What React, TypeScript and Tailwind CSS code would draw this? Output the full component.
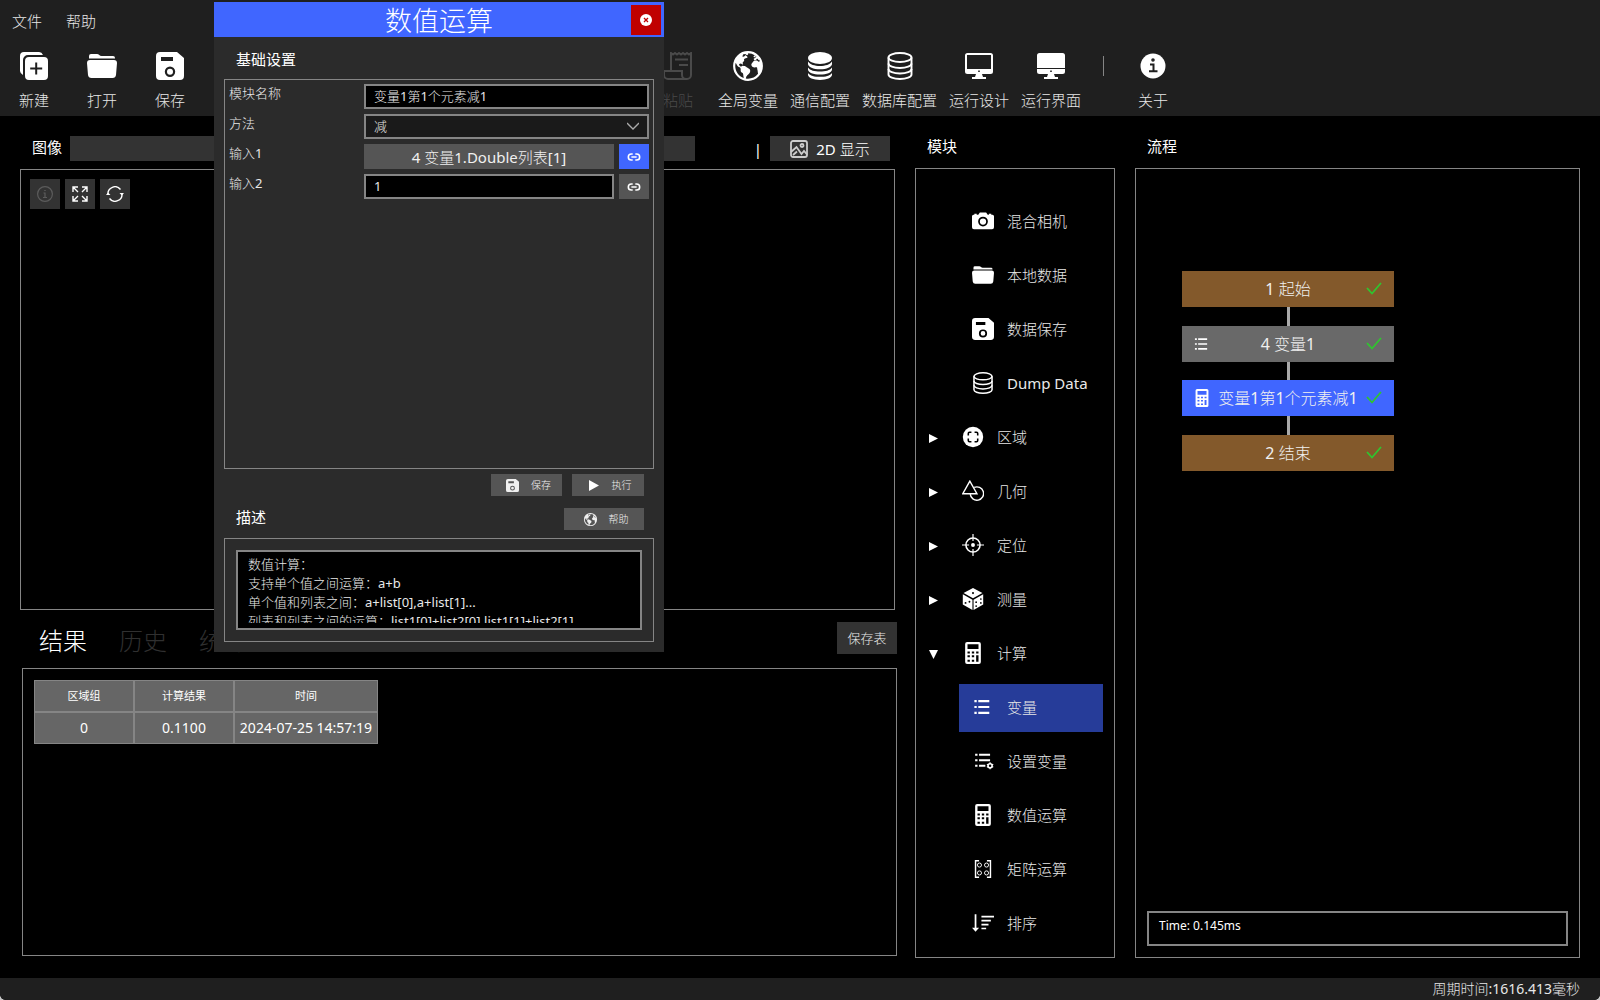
import { Fragment, type ReactNode } from 'react';
import { IoEarth } from 'react-icons/io5';

type IconProps = { className?: string };

function NewIcon({ className }: IconProps) {
  return (
    <svg className={className} viewBox="0 0 28 28" fill="currentColor">
      <path d="M4 0h14a5 5 0 0 1 5 3H8a5 5 0 0 0-5 5v15a5 5 0 0 1-3-5V4a4 4 0 0 1 4-4z" />
      <path fillRule="evenodd" d="M9 5h15a4 4 0 0 1 4 4v15a4 4 0 0 1-4 4H9a4 4 0 0 1-4-4V9a4 4 0 0 1 4-4zm6.2 5.500v5h-5v2h5v5h2v-5h5v-2h-5v-5z" />
    </svg>
  );
}

function FolderIcon({ className }: IconProps) {
  return (
    <svg className={className} viewBox="0 0 30 28" fill="currentColor">
      <path d="M2 6V4a2 2 0 0 1 2-2h6c2 0 2.500 2 4.500 2H26a2 2 0 0 1 2 2v.5H2z" />
      <path d="M3 8h24a3 3 0 0 1 3 3l-1 12a3.500 3.500 0 0 1-3.500 3h-21A3.500 3.500 0 0 1 1 23L0 11a3 3 0 0 1 3-3z" />
    </svg>
  );
}

function SaveIcon({ className }: IconProps) {
  return (
    <svg className={className} viewBox="0 0 28 28" fill="currentColor">
      <path fillRule="evenodd" d="M4 0h17l7 6v18a4 4 0 0 1-4 4H4a4 4 0 0 1-4-4V4a4 4 0 0 1 4-4zm1 5v4h12V5zm9 9.500a5.200 5.200 0 1 0 0 10.400a5.200 5.200 0 0 0 0-10.400zm0 2.200a3 3 0 1 1 0 6a3 3 0 0 1 0-6z" />
    </svg>
  );
}

function PasteIcon({ className }: IconProps) {
  return (
    <svg className={className} viewBox="0 0 28 28" fill="none" stroke="currentColor" strokeWidth="2">
      <path d="M7 19V1l2 1.500 2-1.500 2 1.500 2-1.500 2 1.500 2-1.500 2 1.500 2-1.500 2 1.500 2-1.500v22a4 4 0 0 1-4 4H4a4 4 0 0 1-4-4v-4h18v4a4 4 0 0 0 4 4" />
      <path d="M11 7.500h13M15 13h9" />
    </svg>
  );
}

function DatabaseIcon({ className }: IconProps) {
  return (
    <svg className={className} viewBox="0 0 28 28" fill="none" stroke="currentColor" strokeWidth="1.900">
      <ellipse cx="14" cy="5.500" rx="11.500" ry="4.500" />
      <path d="M2.500 5.500v17c0 2.500 5 4.500 11.500 4.500s11.500-2 11.500-4.500v-17" />
      <path d="M2.500 11.500c0 2.500 5 4.500 11.500 4.500s11.500-2 11.500-4.500M2.500 17c0 2.500 5 4.500 11.500 4.500s11.500-2 11.500-4.500" />
    </svg>
  );
}

function DatabaseFillIcon({ className }: IconProps) {
  return (
    <svg className={className} viewBox="0 0 28 28" fill="currentColor">
      <ellipse cx="14" cy="6" rx="12" ry="6" />
      <path d="M2 9.500c2 3 6.500 4.500 12 4.500s10-1.500 12-4.500v2.500c0 3-5.400 5.300-12 5.300S2 15 2 12z" />
      <path d="M2 15.500c2 3 6.500 4 12 4s10-1 12-4v2c0 3-5.400 5-12 5s-12-2-12-5z" />
      <path d="M2 21c2 3 6.500 3.800 12 3.800s10-.8 12-3.800v1.800c0 3-5.400 5.200-12 5.200s-12-2.200-12-5.200z" />
    </svg>
  );
}

function MonitorIcon({ className }: IconProps) {
  return (
    <svg className={className} viewBox="0 0 28 28" fill="currentColor">
      <path fillRule="evenodd" d="M2.500 1h23A2.500 2.500 0 0 1 28 3.500v16a2.500 2.500 0 0 1-2.500 2.500h-23A2.500 2.500 0 0 1 0 19.500v-16A2.500 2.500 0 0 1 2.500 1zM2 3v14h24V3zm11.200 15.500v1.500h1.600v-1.500z" />
      <path d="M11 22h6l1 3h3v2H7v-2h3z" />
    </svg>
  );
}

function MonitorFillIcon({ className }: IconProps) {
  return (
    <svg className={className} viewBox="0 0 28 28" fill="currentColor">
      <path d="M2.500 1h23A2.500 2.500 0 0 1 28 3.500V16H0V3.500A2.500 2.500 0 0 1 2.500 1z" />
      <path fillRule="evenodd" d="M0 17h28v2.500a2.500 2.500 0 0 1-2.500 2.500h-23A2.500 2.500 0 0 1 0 19.500zm13.200 1.500v1.500h1.600v-1.500z" />
      <path d="M11 22h6l1 3h3v2H7v-2h3z" />
    </svg>
  );
}

function AboutIcon({ className }: IconProps) {
  return (
    <svg className={className} viewBox="0 0 28 28">
      <circle cx="14" cy="14" r="12.500" fill="currentColor" />
      <g stroke="#1f1f1f" strokeWidth="2" fill="none">
        <path d="M11 12.500h3.500V19M10 19.300h8.500" />
        <circle cx="14" cy="8" r=".8" />
      </g>
    </svg>
  );
}

function CameraIcon({ className }: IconProps) {
  return (
    <svg className={className} viewBox="0 0 28 28" fill="currentColor">
      <path fillRule="evenodd" d="M8 6l2-2.800h8L20 6h1.500V4.800h3V6H26a2 2 0 0 1 2 2v14a2.500 2.500 0 0 1-2.500 2.500h-23A2.500 2.500 0 0 1 0 22V8a2 2 0 0 1 2-2h1V4.800h3V6zm6 2.500a6.200 6.200 0 1 0 0 12.400a6.200 6.200 0 0 0 0-12.400zm0 2.200a4 4 0 1 1 0 8a4 4 0 0 1 0-8z" />
    </svg>
  );
}

function RegionIcon({ className }: IconProps) {
  return (
    <svg className={className} viewBox="0 0 28 28">
      <circle cx="14" cy="14" r="13" fill="currentColor" />
      <path
        d="M8 12V9.500A1.500 1.500 0 0 1 9.500 8H12M16 8h2.500A1.500 1.500 0 0 1 20 9.500V12M20 16v2.500a1.500 1.500 0 0 1-1.500 1.500H16M12 20H9.500A1.500 1.500 0 0 1 8 18.500V16"
        fill="none"
        stroke="#000"
        strokeWidth="2"
      />
    </svg>
  );
}

function ShapesIcon({ className }: IconProps) {
  return (
    <svg className={className} viewBox="0 0 28 28" fill="none" stroke="currentColor" strokeWidth="1.800">
      <path d="M10 1.500L1 17.500h18z" />
      <path d="M15.500 9.500A8.500 8.500 0 1 1 10.500 18" />
    </svg>
  );
}

function TargetIcon({ className }: IconProps) {
  return (
    <svg className={className} viewBox="0 0 28 28" fill="none" stroke="currentColor" strokeWidth="2">
      <circle cx="14" cy="14" r="9" />
      <circle cx="14" cy="14" r="2.500" fill="currentColor" stroke="none" />
      <path d="M14 0v9M14 19v9M0 14h9M19 14h9" strokeWidth="1.500" />
    </svg>
  );
}

function DiceIcon({ className }: IconProps) {
  return (
    <svg className={className} viewBox="0 0 28 28">
      <g fill="currentColor">
        <path d="M14 0l12 6.500-12 6.500L2 6.500z" />
        <path d="M1 8l12.300 7v13L1 21z" />
        <path d="M27 8l-12.300 7v13L27 21z" />
      </g>
      <g fill="#000">
        <circle cx="14" cy="6.500" r="1.300" />
        <circle cx="4.500" cy="19" r="1.200" />
        <circle cx="9.500" cy="17.500" r="1.200" />
        <circle cx="18" cy="18" r="1.100" />
        <circle cx="18" cy="23" r="1.100" />
        <circle cx="24" cy="14" r="1.100" />
        <circle cx="24" cy="19" r="1.100" />
      </g>
    </svg>
  );
}

function CalculatorIcon({ className }: IconProps) {
  return (
    <svg className={className} viewBox="0 0 28 28" fill="currentColor">
      <path
        fillRule="evenodd"
        d="M6.500 0h15A2.500 2.500 0 0 1 24 2.500v23a2.500 2.500 0 0 1-2.500 2.500h-15A2.500 2.500 0 0 1 4 25.500v-23A2.500 2.500 0 0 1 6.500 0zM7 3v6h14V3zM7 12v2.500h3V12zm5.500 0v2.500h3V12zm5.500 0v2.500h3V12zM7 17v2.500h3V17zm5.500 0v2.500h3V17zm5.500 0v8h3v-8zM7 22.500V25h3v-2.500zm5.500 0V25h3v-2.500z"
      />
    </svg>
  );
}

function ListIcon({ className }: IconProps) {
  return (
    <svg className={className} viewBox="0 0 28 28" stroke="currentColor" strokeWidth="2.600">
      <path d="M3 6.500h3M8 6.500h14M3 14h3M8 14h14M3 21.500h3M8 21.500h14" />
    </svg>
  );
}

function ListGearIcon({ className }: IconProps) {
  return (
    <svg className={className} viewBox="0 0 28 28" fill="none" stroke="currentColor" strokeWidth="2.400">
      <path d="M4 6h3M9 6h14M4 13h3M9 13h14M4 20h3M9 20h8" />
      <circle cx="23" cy="20" r="2.600" strokeWidth="2" />
      <path d="M23 15.500v2M23 22.500v2M19 18l1.500 1M25.500 21l1.500 1M19 22l1.500-1M25.500 19l1.500-1" strokeWidth="1.500" />
    </svg>
  );
}

function MatrixIcon({ className }: IconProps) {
  return (
    <svg className={className} viewBox="0 0 28 28" fill="none" stroke="currentColor" strokeWidth="1.200">
      <path d="M9 3.500H4.500v21H9M19 3.500h4.500v21H19" strokeWidth="1.800" />
      <circle cx="9.500" cy="9" r="2.600" />
      <circle cx="18.500" cy="9" r="2.600" />
      <circle cx="9.500" cy="19" r="2.600" />
      <circle cx="18.500" cy="19" r="2.600" />
    </svg>
  );
}

function SortIcon({ className }: IconProps) {
  return (
    <svg className={className} viewBox="0 0 28 28" fill="none" stroke="currentColor" strokeWidth="2.200">
      <path d="M4.500 3v19M12 6h16M12 11h12M12 16h9M12 21h6" />
      <path d="M0 20h9l-4.500 5z" fill="currentColor" stroke="none" />
    </svg>
  );
}

function LinkIcon() {
  return (
    <svg className="size-[14px]" viewBox="0 0 16 16" fill="none" stroke="#fff" strokeWidth="1.800">
      <path d="M6.500 4.500H5a3.500 3.500 0 0 0 0 7h1.500M9.500 4.500H11a3.500 3.500 0 0 1 0 7H9.500M5 8h6" />
    </svg>
  );
}

function CheckIcon() {
  return (
    <svg className="w-4 h-4" viewBox="0 0 16 16" fill="none" stroke="#2fc52f" strokeWidth="1.800">
      <path d="M1 7l5 5.500L15 2" />
    </svg>
  );
}

const iconButton = 'flex size-[30px] items-center justify-center bg-[#333]';
const heading = "font-['Noto_Sans','Noto_Sans_CJK_SC',sans-serif]";

function ToolButton({ icon, label, disabled }: { icon: ReactNode; label: string; disabled?: boolean }) {
  return (
    <button
      disabled={disabled}
      className={`flex min-w-14 flex-col items-center gap-[9px] whitespace-nowrap ${disabled ? 'text-[#4a4a4a]' : 'text-white'}`}
    >
      {icon}
      <span className={disabled ? '' : 'text-[#e8e8e8]'}>{label}</span>
    </button>
  );
}

const modules = [
  { label: '混合相机', icon: CameraIcon },
  { label: '本地数据', icon: FolderIcon },
  { label: '数据保存', icon: SaveIcon },
  { label: 'Dump Data', icon: DatabaseIcon },
  { label: '区域', icon: RegionIcon, group: true },
  { label: '几何', icon: ShapesIcon, group: true },
  { label: '定位', icon: TargetIcon, group: true },
  { label: '测量', icon: DiceIcon, group: true },
  { label: '计算', icon: CalculatorIcon, group: true, open: true },
  { label: '变量', icon: ListIcon, active: true },
  { label: '设置变量', icon: ListGearIcon },
  { label: '数值运算', icon: CalculatorIcon },
  { label: '矩阵运算', icon: MatrixIcon },
  { label: '排序', icon: SortIcon },
];

const flowNodes = [
  { label: '1 起始', bg: 'bg-[#83592b]' },
  { label: '4 变量1', bg: 'bg-[#696969]', icon: ListIcon },
  { label: '变量1第1个元素减1', bg: 'bg-[#4066ff]', icon: CalculatorIcon },
  { label: '2 结束', bg: 'bg-[#83592b]' },
];

const description = `数值计算：
支持单个值之间运算：a+b
单个值和列表之间：a+list[0],a+list[1]...
列表和列表之间的运算：list1[0]+list2[0],list1[1]+list2[1]`;

function Header() {
  return (
    <header className="h-[116px] bg-[#1f1f1f]">
      <nav className="flex h-[42px] items-center gap-6 pl-3 text-[#e8e8e8]">
        <button>文件</button>
        <button>帮助</button>
      </nav>
      <div className="flex gap-3 pl-[6px] pt-[10px]">
        <ToolButton icon={<NewIcon className="size-7" />} label="新建" />
        <ToolButton icon={<FolderIcon className="h-7 w-[30px]" />} label="打开" />
        <ToolButton icon={<SaveIcon className="size-7" />} label="保存" />
        <div className="w-[428px] shrink-0" />
        <ToolButton icon={<PasteIcon className="size-7" />} label="粘贴" disabled />
        <ToolButton icon={<IoEarth className="-m-[3px] size-[34px]" />} label="全局变量" />
        <ToolButton icon={<DatabaseFillIcon className="size-7" />} label="通信配置" />
        <ToolButton icon={<DatabaseIcon className="size-7" />} label="数据库配置" />
        <ToolButton icon={<MonitorIcon className="size-7" />} label="运行设计" />
        <ToolButton icon={<MonitorFillIcon className="size-7" />} label="运行界面" />
        <div className="mt-1 flex w-5 justify-center">
          <div className="h-5 w-px bg-[#858585]" />
        </div>
        <ToolButton icon={<AboutIcon className="size-7" />} label="关于" />
      </div>
    </header>
  );
}

function ImagePanel() {
  return (
    <>
      <div className="flex h-[53px] items-center pl-3 pr-[7px] pt-3">
        <label htmlFor="image" className={`mb-1 ${heading}`}>图像</label>
        <input id="image" className="ml-2 h-[25px] min-w-0 flex-1 bg-[#333]" />
        <span className="mr-2 w-[67px] text-right">|</span>
        <button className="flex h-[25px] w-[120px] items-center justify-center gap-2 bg-[#333]">
          <svg className="size-[18px]" viewBox="0 0 18 18" fill="none" stroke="#ccc" strokeWidth="1.800">
            <rect x="1" y="1" width="16" height="16" rx="2" />
            <circle cx="12" cy="5.500" r="1.500" />
            <path d="M1 12l5.500-5 5 7 2.500-3 3 3.500M3 15l4-3.500" />
          </svg>
          2D 显示
        </button>
      </div>
      <div className="mr-[2px] flex-1 border border-[#858585] p-[9px]">
        <div className="flex gap-[5px]">
          <button className={iconButton} disabled aria-label="信息">
            <svg className="size-4" viewBox="0 0 16 16" fill="none" stroke="#5c5c5c" strokeWidth="1.200">
              <circle cx="8" cy="8" r="7.400" />
              <path d="M6.500 7H8v4.500M6 11.500h4M7.300 4.500h1.400" />
            </svg>
          </button>
          <button className={iconButton} aria-label="全屏">
            <svg className="size-4" viewBox="0 0 16 16" fill="none" stroke="#fff" strokeWidth="1.400">
              <path d="M1 6V1h5M1 1l5 5M10 1h5v5M15 1l-5 5M1 10v5h5M1 15l5-5M15 10v5h-5M15 15l-5-5" />
            </svg>
          </button>
          <button className={iconButton} aria-label="刷新">
            <svg className="h-4 w-[18px]" viewBox="0 0 18 16" fill="none" stroke="#fff" strokeWidth="1.400">
              <path d="M2 8.500A7 7 0 0 1 14.500 3.500M16 7.500A7 7 0 0 1 3.500 12.500" />
              <path d="M0 9l2-2.500L4.500 9zM13.500 7h4.500l-2.200 2.500z" fill="#fff" stroke="none" />
            </svg>
          </button>
        </div>
      </div>
    </>
  );
}

function ResultPanel() {
  const cell = 'h-8 border border-[#858585] px-1 text-center';
  return (
    <>
      <div className="flex h-[58px] items-center pb-[2px] pl-[19px]">
        <div className="flex flex-1 gap-8 pt-[6px] text-2xl text-[#303030]">
          <button className="text-white">结果</button>
          <button>历史</button>
          <button>统计</button>
        </div>
        <button className="h-8 w-[60px] bg-[#333] text-[13px] text-[#e8e8e8]">保存表</button>
      </div>
      <div className="ml-[2px] h-[288px] border border-[#858585] p-[11px]">
        <table className="border-separate border-spacing-0 bg-[#666] text-sm">
          <thead>
            <tr className={`text-[11px] ${heading}`}>
              <th className={`${cell} w-[100px] font-normal`}>区域组</th>
              <th className={`${cell} w-[100px] font-normal`}>计算结果</th>
              <th className={`${cell} w-[144px] font-normal`}>时间</th>
            </tr>
          </thead>
          <tbody>
            <tr>
              <td className={cell}>0</td>
              <td className={cell}>0.1100</td>
              <td className={`${cell} whitespace-nowrap`}>2024-07-25 14:57:19</td>
            </tr>
          </tbody>
        </table>
      </div>
    </>
  );
}

function ModulePanel() {
  return (
    <section className="flex w-[200px] flex-col">
      <h2 className={`flex h-[52px] items-center pl-3 pt-2 ${heading}`}>模块</h2>
      <ul className="flex flex-1 flex-col gap-[6px] border border-[#858585] pl-3 pr-[11px] pt-[29px]">
        {modules.map(({ label, icon: Icon, group, open, active }) => (
          <li key={label} className="flex h-12">
            <span className="flex w-[31px] items-center pl-px">
              {group && (
                <svg className={`size-[9px] ${open ? 'rotate-90' : ''}`} viewBox="0 0 9 9" fill="#fff">
                  <path d="M0 0l9 4.500L0 9z" />
                </svg>
              )}
            </span>
            <button
              className={`flex flex-1 items-center gap-[13px] whitespace-nowrap pb-[2px] ${group ? 'pl-[3px]' : 'pl-[13px]'} ${active ? 'bg-[#263c99]' : ''}`}
            >
              <Icon className="size-[22px] shrink-0" />
              <span className="text-[#e8e8e8]">{label}</span>
            </button>
          </li>
        ))}
      </ul>
    </section>
  );
}

function FlowPanel() {
  return (
    <section className="flex w-[445px] flex-col">
      <h2 className={`flex h-[52px] items-center pl-3 pt-2 ${heading}`}>流程</h2>
      <div className="flex flex-1 flex-col justify-between border border-[#858585] p-[11px]">
        <div className="ml-[35px] mt-[91px] flex h-[200px] w-[212px] flex-col items-center">
          {flowNodes.map(({ label, bg, icon: Icon }, i) => (
            <Fragment key={label}>
              {i > 0 && <div className="w-[3px] flex-1 bg-[#a9a9a9]" />}
              <div className={`grid h-9 w-full grid-cols-[36px_1fr_36px] items-center whitespace-nowrap ${bg}`}>
                <span className="flex justify-center pl-1">{Icon && <Icon className="size-[18px]" />}</span>
                <span className="text-center text-base text-[#f0f0f0]">{label}</span>
                <span className="flex pl-2"><CheckIcon /></span>
              </div>
            </Fragment>
          ))}
        </div>
        <output className="block h-[35px] border-2 border-[#858585] px-[10px] py-[3px] text-xs leading-5">
          Time: 0.145ms
        </output>
      </div>
    </section>
  );
}

function MathDialog() {
  const field = 'h-[25px] w-full border-2 border-[#858585] px-2 pb-[2px] text-[13px]';
  const row = 'grid grid-cols-[135px_1fr] items-start text-[13px] leading-[18px] text-[#e8e8e8]';
  const small = 'flex h-[22px] items-center justify-center bg-[#555] pl-1 text-[10px] text-[#f0f0f0]';
  return (
    <div role="dialog" aria-label="数值运算" className="absolute left-[214px] top-[2px] flex h-[650px] w-[450px] flex-col bg-[#2b2b2b]">
      <div className="grid h-[35px] grid-cols-[30px_1fr_30px] items-center bg-[#4066ff] px-[3px]">
        <h1 className="col-start-2 pt-[2px] text-center text-[27px] leading-[33px]">数值运算</h1>
        <button aria-label="关闭" className="flex size-[30px] items-center justify-center bg-[#c00000]">
          <svg className="size-3" viewBox="0 0 12 12">
            <circle cx="6" cy="6" r="6" fill="#fff" />
            <path d="M4 4l4 4M8 4l-4 4" stroke="#c00000" strokeWidth="1.300" />
          </svg>
        </button>
      </div>

      <h2 className={`pb-px pl-[22px] pt-[3px] leading-[38px] ${heading}`}>基础设置</h2>
      <form className="mx-[10px] flex flex-1 flex-col gap-[5px] border border-[#858585] p-1">
        <div className={row}>
          <label htmlFor="name">模块名称</label>
          <input id="name" defaultValue="变量1第1个元素减1" className={`${field} bg-black`} />
        </div>
        <div className={row}>
          <label htmlFor="method">方法</label>
          <div className="relative">
            <select id="method" className={`${field} block appearance-none bg-[#1a1a1a]`}>
              <option>减</option>
            </select>
            <svg className="pointer-events-none absolute right-[10px] top-2 h-2 w-3" viewBox="0 0 12 8" fill="none" stroke="#aaa" strokeWidth="1.300">
              <path d="M0 1l6 6 6-6" />
            </svg>
          </div>
        </div>
        <div className={row}>
          <span>输入1</span>
          <div className="flex gap-[5px]">
            <button type="button" className="h-[25px] flex-1 bg-[#555] text-[15px] text-[#f0f0f0]">4 变量1.Double列表[1]</button>
            <button type="button" aria-label="链接输入1" className="flex h-[25px] w-[30px] items-center justify-center bg-[#4066ff]"><LinkIcon /></button>
          </div>
        </div>
        <div className={row}>
          <label htmlFor="input2">输入2</label>
          <div className="flex gap-[5px]">
            <input id="input2" defaultValue="1" className={`${field} min-w-0 flex-1 bg-black`} />
            <button type="button" aria-label="链接输入2" className="flex h-[25px] w-[30px] items-center justify-center bg-[#555]"><LinkIcon /></button>
          </div>
        </div>
      </form>

      <div className="flex justify-end gap-[10px] px-5 pt-[5px]">
        <button className={`${small} w-[71px] gap-3`}><SaveIcon className="size-[13px]" />保存</button>
        <button className={`${small} w-[72px] gap-[13px]`}>
          <svg className="h-[11px] w-[10px]" viewBox="0 0 10 11" fill="#fff">
            <path d="M0 0l10 5.500L0 11z" />
          </svg>
          执行
        </button>
      </div>
      <div className="flex items-start justify-between pb-2 pl-[22px] pr-5 pt-3">
        <h2 className={`leading-[18px] ${heading}`}>描述</h2>
        <button className={`${small} w-20 gap-3`}><IoEarth className="-m-px size-[15px]" />帮助</button>
      </div>
      <div className="mx-[10px] mb-[10px] border border-[#858585] p-[11px]">
        <div className="h-20 border-2 border-[#858585] bg-black px-[10px] pb-[5px] pt-[3px]">
          <textarea
            aria-label="描述"
            readOnly
            defaultValue={description}
            className="block h-full w-full resize-none overflow-hidden text-[13px] leading-[19px] text-[#e8e8e8]"
          />
        </div>
      </div>
    </div>
  );
}

export default function App() {
  return (
    <div className="bg-[#c8c8c8]">
      <div
        lang="zh-CN"
        className="relative flex min-h-screen flex-col overflow-hidden rounded-b-md bg-black font-['Noto_Sans','Noto_Sans_CJK_SC_Light','Noto_Sans_CJK_SC',sans-serif] text-[15px] leading-[22px] text-white"
      >
        <Header />
        <main className="flex flex-1 gap-5 px-5 pb-5">
          <section className="-mr-[2px] mb-[2px] flex min-w-0 flex-1 flex-col">
            <ImagePanel />
            <ResultPanel />
          </section>
          <ModulePanel />
          <FlowPanel />
        </main>
        <footer className="flex h-[22px] items-center justify-end bg-[#1f1f1f] px-5 text-sm text-[#e8e8e8]">周期时间:1616.413毫秒</footer>
        <MathDialog />
      </div>
    </div>
  );
}
